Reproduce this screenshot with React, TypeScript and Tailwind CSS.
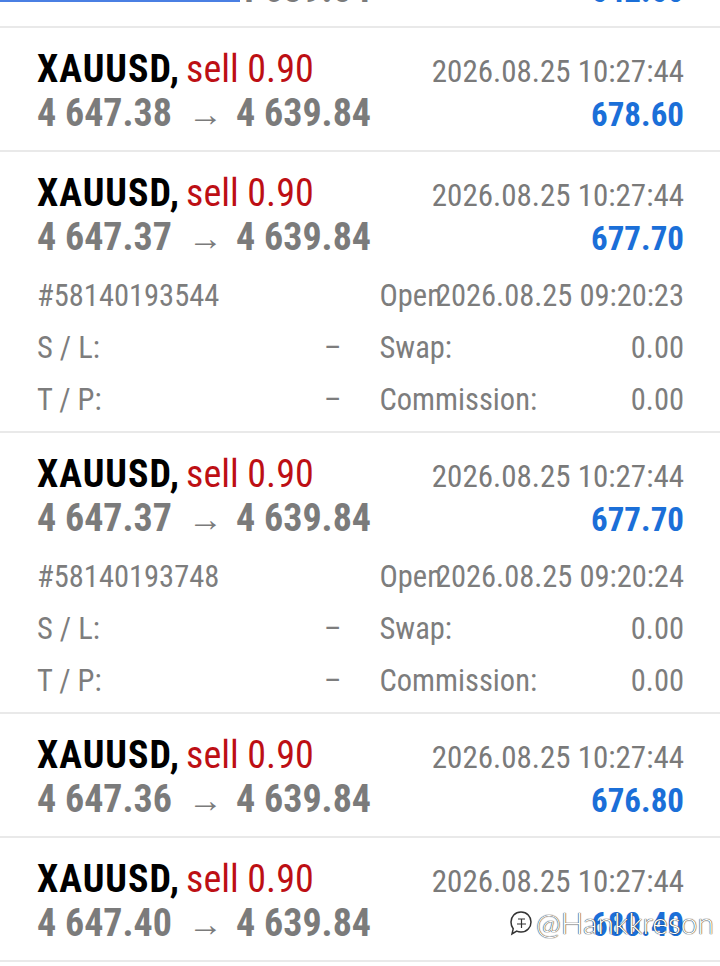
type Deal = {
  open: string;
  close: string;
  profit: string;
  ticket?: string;
  openTime?: string;
};

const deals: Deal[] = [
  { open: "4 647.38", close: "4 639.84", profit: "678.60" },
  {
    open: "4 647.37",
    close: "4 639.84",
    profit: "677.70",
    ticket: "#58140193544",
    openTime: "2026.08.25 09:20:23",
  },
  {
    open: "4 647.37",
    close: "4 639.84",
    profit: "677.70",
    ticket: "#58140193748",
    openTime: "2026.08.25 09:20:24",
  },
  { open: "4 647.36", close: "4 639.84", profit: "676.80" },
  { open: "4 647.40", close: "4 639.84", profit: "680.40" },
];

const PriceLine = ({ deal }: { deal: Deal }) => {
  return (
    <div className="flex h-[44px] items-baseline justify-between leading-[44px]">
      <div className="font-bold text-[38px] text-[#7b7b7b]">
        {deal.open}
        <span className="ml-[16px] mr-[13px] font-normal text-[35px]">→</span>
        {deal.close}
      </div>
      <div className="font-bold text-[33px] text-[#1b6fd8]">{deal.profit}</div>
    </div>
  );
};

const DealRow = ({ deal }: { deal: Deal }) => {
  return (
    <div
      className={
        "border-b-2 border-[#e9e9e9] pl-[37px] pr-[36px] pt-[19px] " +
        (deal.ticket ? "pb-[5px]" : "pb-[15px]")
      }
    >
      <div className="flex h-[44px] items-baseline justify-between leading-[44px]">
        <div className="text-[38px]">
          <span className="font-bold tracking-[1px] text-black">XAUUSD,</span>
          <span className="ml-[6px] text-[#bd0f14]">sell 0.90</span>
        </div>
        <div className="text-[31px] text-[#7a7a7a]">2026.08.25 10:27:44</div>
      </div>
      <PriceLine deal={deal} />

      {deal.ticket && (
        <div className="mt-[11px] grid grid-cols-2 gap-x-[38px] text-[30.5px] leading-[52px] text-[#7d7d7d]">
          <div className="h-[52px]">{deal.ticket}</div>
          <div className="grid h-[52px]">
            <span className="[grid-area:1/1] justify-self-start">Open</span>
            <span className="[grid-area:1/1] justify-self-end">
              {deal.openTime}
            </span>
          </div>

          <div className="flex h-[52px] justify-between">
            <span>S / L:</span>
            <span>–</span>
          </div>
          <div className="flex h-[52px] justify-between">
            <span>Swap:</span>
            <span>0.00</span>
          </div>

          <div className="flex h-[52px] justify-between">
            <span>T / P:</span>
            <span>–</span>
          </div>
          <div className="flex h-[52px] justify-between">
            <span>Commission:</span>
            <span>0.00</span>
          </div>
        </div>
      )}
    </div>
  );
};

export default function App() {
  return (
    <div className="relative h-[966px] w-[720px] overflow-hidden bg-white font-['Roboto_Condensed',Roboto,sans-serif] [font-stretch:condensed]">
      {/* previous row, scrolled mostly out of view */}
      <div className="relative h-[28px] overflow-hidden border-b-2 border-[#e9e9e9] pl-[37px] pr-[36px]">
        <div className="mt-[-33px]">
          <PriceLine deal={{ open: "4 646.98", close: "4 639.84", profit: "642.60" }} />
        </div>
        <div className="absolute left-0 top-0 h-[2px] w-[240px] bg-[#4a7fe3]" />
      </div>

      {deals.map((deal, idx) => (
        <DealRow deal={deal} key={idx} />
      ))}

      {/* watermark */}
      <div className="absolute left-[508px] top-[900px] flex items-center gap-[2px] font-['Lato',sans-serif] text-[30px] font-light text-white [font-stretch:normal] [text-shadow:0_0_1px_#222,0_0_1px_#222]">
        <svg width="26" height="30" viewBox="0 0 26 30" fill="none">
          <path
            d="M13 4c6 0 10 4.5 10 10s-4 10-10 10c-1.5 0-3-.3-4.3-.9L4 26l1.2-5.2C3.8 19 3 16.6 3 14 3 8.5 7 4 13 4z"
            stroke="#333"
            strokeWidth="1.5"
            fill="white"
          />
          <path d="M10 11h7M13.5 11v9M9 16h9" stroke="#333" strokeWidth="1.2" />
        </svg>
        <span>@Hankkreson</span>
      </div>
    </div>
  );
}
